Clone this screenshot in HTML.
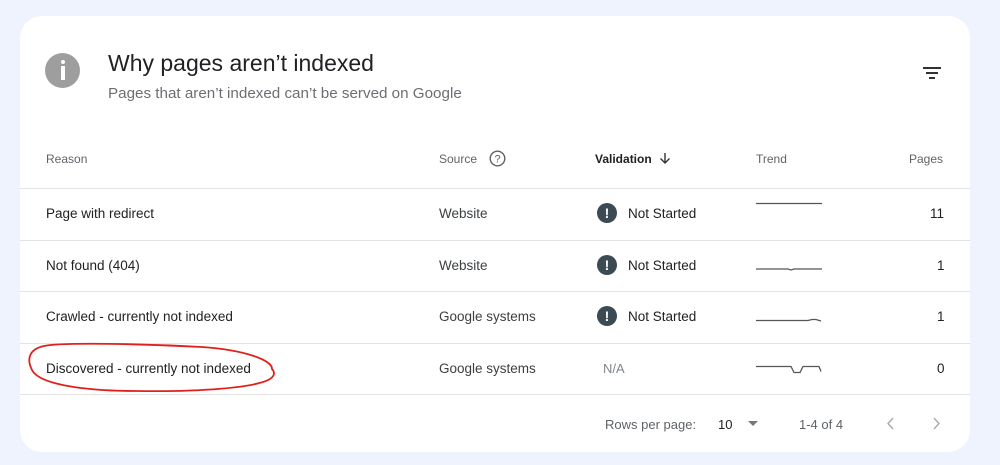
<!DOCTYPE html>
<html><head><style>
body{margin:0;width:1000px;height:465px;background:#eef3fd;font-family:"Liberation Sans",Arial,sans-serif;position:relative;overflow:hidden}
.card{position:absolute;left:20px;top:16px;width:950px;height:436px;background:#fff;border-radius:22px}
.t{position:absolute;white-space:nowrap}
.hl{position:absolute;left:20px;width:950px;height:1px;background:#e3e3e3}
.h{font-size:12px;color:#5f6368}
.c{font-size:13.5px;color:#202124}
.g{font-size:13.5px;color:#3c4043}
.ex{position:absolute;width:20px;height:20px;border-radius:50%;background:#3c4a54;color:#fff;font-weight:bold;font-size:14px;text-align:center;line-height:20px}
</style></head><body>
<div class="card"></div>
<div style="position:absolute;left:45px;top:53px;width:35px;height:35px;border-radius:50%;background:#9e9e9e"></div>
<div style="position:absolute;left:60.5px;top:60px;width:4px;height:4px;border-radius:50%;background:#fff"></div>
<div style="position:absolute;left:60.5px;top:66px;width:4px;height:14px;background:#fff"></div>
<div class="t" style="left:108px;top:50px;font-size:23px;color:#202124">Why pages aren’t indexed</div>
<div class="t" style="left:108px;top:85px;font-size:15.2px;color:#6b6f73">Pages that aren’t indexed can’t be served on Google</div>
<svg style="position:absolute;left:922px;top:66px" width="20" height="14"><path d="M1 2h18M4 7h12M7 12h6" stroke="#333" stroke-width="2"/></svg>
<div class="t h" style="left:46px;top:152px">Reason</div>
<div class="t h" style="left:439px;top:152px">Source</div>
<svg style="position:absolute;left:489px;top:150px" width="17" height="17"><circle cx="8.5" cy="8.5" r="7.3" fill="none" stroke="#5f6368" stroke-width="1.4"/><text x="8.5" y="12.5" font-size="11" text-anchor="middle" fill="#5f6368" font-family="Liberation Sans">?</text></svg>
<div class="t" style="left:595px;top:152px;font-size:12px;color:#202124;font-weight:bold">Validation</div>
<svg style="position:absolute;left:659px;top:152px" width="12" height="13"><path d="M6 1v10M1.5 6.5L6 11l4.5-4.5" fill="none" stroke="#333" stroke-width="1.4"/></svg>
<div class="t h" style="left:756px;top:152px">Trend</div>
<div class="t h" style="left:909px;top:152px">Pages</div>
<div class="hl" style="top:188px"></div>
<div class="hl" style="top:240px"></div>
<div class="hl" style="top:291px"></div>
<div class="hl" style="top:343px"></div>
<div class="hl" style="top:394px"></div>

<div class="t c" style="left:46px;top:206px">Page with redirect</div>
<div class="t g" style="left:439px;top:206px">Website</div>
<div class="ex" style="left:597px;top:203px">!</div>
<div class="t c" style="left:628px;top:206px">Not Started</div>
<div class="t c" style="left:930px;top:206px">11</div>

<div class="t c" style="left:46px;top:258px">Not found (404)</div>
<div class="t g" style="left:439px;top:258px">Website</div>
<div class="ex" style="left:597px;top:255px">!</div>
<div class="t c" style="left:628px;top:258px">Not Started</div>
<div class="t c" style="left:937px;top:258px">1</div>

<div class="t c" style="left:46px;top:309px">Crawled - currently not indexed</div>
<div class="t g" style="left:439px;top:309px">Google systems</div>
<div class="ex" style="left:597px;top:306px">!</div>
<div class="t c" style="left:628px;top:309px">Not Started</div>
<div class="t c" style="left:937px;top:309px">1</div>

<div class="t c" style="left:46px;top:361px">Discovered - currently not indexed</div>
<div class="t g" style="left:439px;top:361px">Google systems</div>
<div class="t" style="left:603px;top:361px;font-size:13px;color:#80868b">N/A</div>
<div class="t c" style="left:937px;top:361px">0</div>

<svg style="position:absolute;left:0;top:0" width="1000" height="465">
<g fill="none" stroke="#555" stroke-width="1.3">
<path d="M756 203.5h66"/>
<path d="M756 269h32l3 1 3-1h28"/>
<path d="M756 320.5h52l4-1h4l5 1.5"/>
<path d="M756 366.5h35l3 6h6l3-6h16l2 5"/>
</g>
<path d="M272 370c2-10-28-20-70-23-55-3-140-5-158-1-14 3-18 12-12 24 7 14 50 21 105 21 60 1 118-3 133-12 6-4 4-8 2-10" fill="none" stroke="#e0201b" stroke-width="1.8"/>
<path d="M748 421l5 5 5-5z" fill="#777"/>
<path d="M893 418l-5 5.5 5 5.5M934 418l5 5.5-5 5.5" fill="none" stroke="#aaa" stroke-width="1.4"/>
</svg>
<div class="t" style="left:605px;top:417px;font-size:13px;color:#5f6368">Rows per page:</div>
<div class="t" style="left:718px;top:417px;font-size:13px;color:#202124">10</div>
<div class="t" style="left:799px;top:417px;font-size:13px;color:#5f6368">1-4 of 4</div>
</body></html>
